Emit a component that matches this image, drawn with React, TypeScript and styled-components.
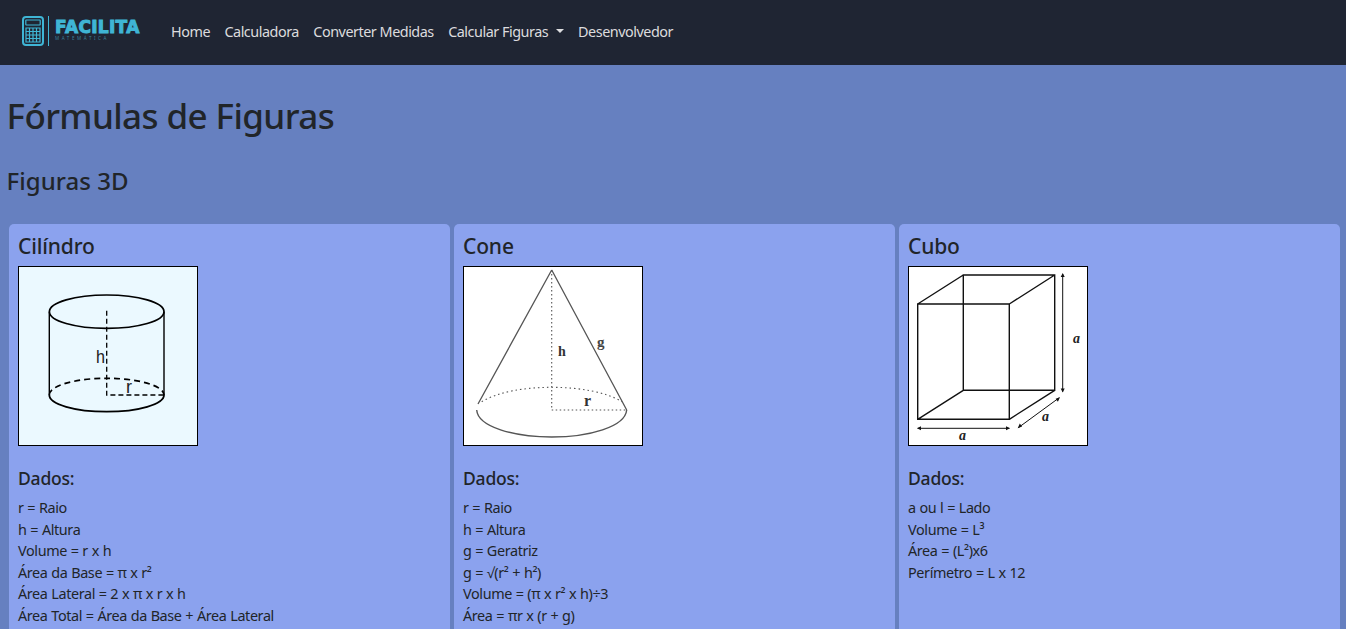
import React from "react";
import styled, { createGlobalStyle } from "styled-components";

const Global = createGlobalStyle`
  * { box-sizing: border-box; }
  html, body { margin: 0; padding: 0; height: 100%; overflow: hidden; }
  body { background: #6680c0; color: #212529; font-family: "Noto Sans", "Open Sans", sans-serif; font-size: 14.4px; line-height: 1.5; }
`;

const Page = styled.div`
  height: 100vh;
  overflow: hidden;
`;

const NavBar = styled.nav`
  height: 65px;
  background: #1f2533;
  display: flex;
  align-items: center;
  padding: 0 22px 2px;
`;

const Brand = styled.a`
  display: flex;
  align-items: center;
  width: 142px;
  gap: 4px;
  margin-bottom: 2px;
  color: #3fb5d5;
`;

const BrandDivider = styled.span`
  width: 1px;
  height: 30px;
  background: #3fb5d5;
  margin-right: 2px;
`;

const BrandWords = styled.span`
  display: flex;
  flex-direction: column;
`;

const BrandName = styled.span`
  font-family: "DejaVu Sans", sans-serif;
  font-weight: 700;
  font-size: 17px;
  line-height: 16px;
  letter-spacing: 0.3px;
  -webkit-text-stroke: 1px #3fb5d5;
`;

const BrandSub = styled.span`
  font-size: 4.5px;
  line-height: 7px;
  letter-spacing: 2.6px;
  color: #3b7f97;
`;

const NavList = styled.div`
  display: flex;
  align-items: center;
  margin-left: 7px;
  gap: 14.4px;
`;

const NavLink = styled.a`
  color: rgba(255, 255, 255, 0.85);
  letter-spacing: -0.48px;
  display: inline-flex;
  align-items: center;
`;

const Caret = styled.span`
  display: inline-block;
  margin-left: 7.5px;
  border-top: 4px solid rgba(255, 255, 255, 0.85);
  border-left: 4px solid transparent;
  border-right: 4px solid transparent;
`;

const Content = styled.main`
  padding: 0 6px;
`;

const PageTitle = styled.h1`
  margin: 25px 0 0 0.5px;
  font-size: 35px;
  line-height: 52px;
  font-weight: 550;
  letter-spacing: -0.6px;
`;

const SectionTitle = styled.h2`
  margin: 21px 0 0 0.5px;
  font-size: 24px;
  line-height: 36px;
  font-weight: 500;
  letter-spacing: 0.05px;
`;

const CardGrid = styled.div`
  display: grid;
  grid-template-columns: repeat(3, 441px);
  gap: 4px;
  margin: 25px 0 0 3px;
`;

const Card = styled.section`
  background: #8ba2ee;
  border-radius: 5px;
  padding: 7px 9px 24px;
  height: 480px;
`;

const CardTitle = styled.h3`
  margin: 0 0 5px;
  font-size: 21px;
  line-height: 30px;
  font-weight: 500;
  letter-spacing: -0.15px;
`;

const Figure = styled.svg<{ $bg: string }>`
  display: block;
  width: 180px;
  height: 180px;
  border: 1px solid #000;
  background: ${(p) => p.$bg};
`;

const DataTitle = styled.h4`
  margin: 19px 0 6px;
  font-size: 17.5px;
  line-height: 26px;
  font-weight: 500;
  letter-spacing: -0.2px;
`;

const DataLine = styled.p`
  margin: 0;
  line-height: 21.6px;
  letter-spacing: -0.38px;
  word-spacing: 0.4px;
`;

const serif = { fontFamily: '"Liberation Serif", serif' };

const Cylinder = () => (
  <Figure $bg="#ebf9ff" viewBox="0 0 178 178" fill="none" stroke="#000">
    <ellipse cx="87.7" cy="44.7" rx="57.3" ry="16.7" strokeWidth="1.7" />
    <path d="M30.3 44.7V128M145 44.7V128" strokeWidth="1.4" />
    <path d="M30.3 128A57.3 16.7 0 0 0 145 128" strokeWidth="1.8" />
    <path d="M30.3 128A57.3 16.7 0 0 1 145 128" strokeWidth="1.7" strokeDasharray="6 4" />
    <path d="M87.7 43.7V128H145" strokeWidth="1.3" strokeDasharray="5 3" />
    <text x="77" y="96" fontSize="19" fill="#222" stroke="none" fontFamily='"Liberation Sans", sans-serif' textLength="9" lengthAdjust="spacingAndGlyphs">h</text>
    <text x="107" y="126" fontSize="18" fill="#222" stroke="none" fontFamily='"Liberation Sans", sans-serif'>r</text>
  </Figure>
);

const Cone = () => (
  <Figure $bg="#ffffff" viewBox="0 0 178 178" fill="none" stroke="#555">
    <path d="M87.7 3L14 137M87.7 3L162.7 143" strokeWidth="1.3" />
    <path d="M12.7 143C14 160 50 170 87.7 170C125 170 161 160 162.7 143" strokeWidth="1.4" />
    <path d="M17.7 134.7C34 125 60 120.3 87.7 120.3C115 120.3 142 125 158 134.7" strokeWidth="1.1" strokeDasharray="1.5 3" />
    <path d="M87.7 3V143H162.7" strokeWidth="1.1" strokeDasharray="1.5 2.5" />
    <text x="94" y="89" fontSize="14" fontWeight="700" fill="#333" stroke="none" style={serif}>h</text>
    <text x="133" y="80" fontSize="15" fontWeight="700" fill="#444" stroke="none" style={serif}>g</text>
    <text x="120" y="139" fontSize="16" fontWeight="700" fill="#333" stroke="none" style={serif}>r</text>
  </Figure>
);

const Cube = () => (
  <Figure $bg="#ffffff" viewBox="0 0 178 178" fill="none" stroke="#111">
    <path d="M8.7 37H100.3V152.3H8.7ZM54.3 8H145.7V123.3H54.3ZM8.7 37L54.3 8M100.3 37L145.7 8M8.7 152.3L54.3 123.3M100.3 152.3L145.7 123.3" strokeWidth="1.4" />
    <path d="M8.7 161.3H100.3M153.7 7V124.7M109.3 160.7L150.3 130.7" strokeWidth="1" />
    <path d="M8 161.3l4-2v4ZM101 161.3l-4-2v4ZM153.7 6l-2 4h4ZM153.7 125.5l-2-4h4ZM108.7 161.2l4.4-1.6-2.3-3ZM151 130.2l-4.4 1.6 2.3 3Z" fill="#111" stroke="none" />
    <text x="50" y="173" fontSize="14" fontStyle="italic" fontWeight="700" fill="#222" stroke="none" style={serif}>a</text>
    <text x="164" y="76" fontSize="14" fontStyle="italic" fontWeight="700" fill="#222" stroke="none" style={serif}>a</text>
    <text x="133" y="154" fontSize="14" fontStyle="italic" fontWeight="700" fill="#222" stroke="none" style={serif}>a</text>
  </Figure>
);

const CalculatorIcon = () => (
  <svg width="22" height="30" viewBox="0 0 22 30" fill="none" stroke="#3fb5d5">
    <rect x="1" y="1" width="20" height="28" rx="3" strokeWidth="2" />
    <rect x="3.8" y="4" width="14.4" height="5" rx="0.5" strokeWidth="1.2" />
    <path d="M4 12H18V26H4ZM4 15.5H18M4 19H18M4 22.5H18M7.5 12V26M11 12V26M14.5 12V26" strokeWidth="1.2" />
  </svg>
);

const cards = [
  {
    title: "Cilíndro",
    figure: <Cylinder />,
    lines: ["r = Raio", "h = Altura", "Volume = r x h", "Área da Base = π x r²", "Área Lateral = 2 x π x r x h", "Área Total = Área da Base + Área Lateral"],
  },
  {
    title: "Cone",
    figure: <Cone />,
    lines: ["r = Raio", "h = Altura", "g = Geratriz", "g = √(r² + h²)", "Volume = (π x r² x h)÷3", "Área = πr x (r + g)"],
  },
  {
    title: "Cubo",
    figure: <Cube />,
    lines: ["a ou l = Lado", "Volume = L³", "Área = (L²)x6", "Perímetro = L x 12"],
  },
];

export default function App() {
  return (
    <Page>
      <Global />
      <NavBar>
        <Brand>
          <CalculatorIcon />
          <BrandDivider />
          <BrandWords>
            <BrandName>FACILITA</BrandName>
            <BrandSub>MATEMÁTICA</BrandSub>
          </BrandWords>
        </Brand>
        <NavList>
          <NavLink>Home</NavLink>
          <NavLink>Calculadora</NavLink>
          <NavLink>Converter Medidas</NavLink>
          <NavLink>Calcular Figuras<Caret /></NavLink>
          <NavLink>Desenvolvedor</NavLink>
        </NavList>
      </NavBar>
      <Content>
        <PageTitle>Fórmulas de Figuras</PageTitle>
        <SectionTitle>Figuras 3D</SectionTitle>
        <CardGrid>
          {cards.map((c) => (
            <Card key={c.title}>
              <CardTitle>{c.title}</CardTitle>
              {c.figure}
              <DataTitle>Dados:</DataTitle>
              {c.lines.map((l) => (
                <DataLine key={l}>{l}</DataLine>
              ))}
            </Card>
          ))}
        </CardGrid>
      </Content>
    </Page>
  );
}
